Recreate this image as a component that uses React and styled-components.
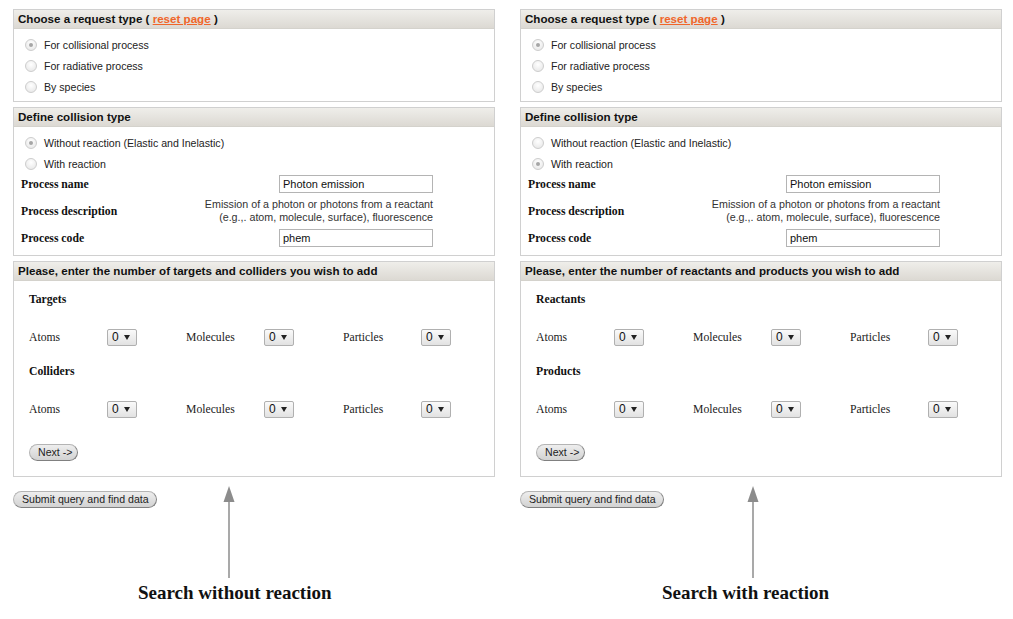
import React from "react";
import styled, { createGlobalStyle } from "styled-components";

const GlobalStyle = createGlobalStyle`
  body {
    margin: 0;
    background: #fff;
    font-family: "Liberation Sans", Arial, sans-serif;
    color: #222;
  }
`;

const Page = styled.div`
  display: flex;
  gap: 25px;
  padding: 9px 0 0 13px;
`;

const Column = styled.div`
  width: 482px;
  display: flex;
  flex-direction: column;
  gap: 5px;
`;

const Box = styled.div`
  border: 1px solid #d0d0d0;
  background: #fff;
`;

const BoxHeader = styled.div`
  height: 18px;
  line-height: 18px;
  padding-left: 4px;
  font-size: 11.6px;
  font-weight: bold;
  color: #111;
  background: linear-gradient(#efeeea, #dcd9d3);
  border-bottom: 1px solid #d4d2cc;
  white-space: nowrap;
`;

const ResetLink = styled.a`
  color: #f0662a;
  text-decoration: underline;
  cursor: pointer;
`;

const RadioList = styled.div`
  padding: 5px 0 ${p => p.$bottom ?? 4}px 11px;
`;

const RadioRow = styled.label`
  display: flex;
  align-items: center;
  gap: 7px;
  height: 21px;
  font-size: 10.6px;
  color: #222;
`;

const RadioDot = styled.span`
  width: 10px;
  height: 10px;
  border-radius: 50%;
  border: 1px solid #cdcdcd;
  background: radial-gradient(circle at 50% 35%, #ffffff, #e4e4e4);
  display: flex;
  align-items: center;
  justify-content: center;

  &::after {
    content: "";
    width: 4px;
    height: 4px;
    border-radius: 50%;
    background: #a6a6a6;
    display: ${p => (p.$checked ? "block" : "none")};
  }
`;

const ProcessTable = styled.div`
  display: grid;
  grid-template-columns: auto 1fr;
  row-gap: 5px;
  align-items: center;
  padding: 1px 61px 8px 7px;
`;

const ProcessLabel = styled.div`
  font-family: "Liberation Serif", "Times New Roman", serif;
  font-weight: bold;
  font-size: 11.7px;
  color: #111;
`;

const ProcessValue = styled.div`
  justify-self: end;
  text-align: right;
  font-size: 10.7px;
  line-height: 13px;
  color: #333;
`;

const TextInput = styled.div`
  box-sizing: border-box;
  width: 154px;
  height: 18px;
  line-height: 16px;
  padding-left: 3px;
  border: 1px solid #b4b4b4;
  font-size: 11px;
  color: #111;
  text-align: left;
`;

const CountArea = styled.div`
  padding: 12px 0 15px 15px;
`;

const Section = styled.div`
  margin-bottom: ${p => p.$gap}px;
`;

const SectionTitle = styled.div`
  height: 14px;
  line-height: 14px;
  margin-bottom: 21px;
  font-family: "Liberation Serif", "Times New Roman", serif;
  font-weight: bold;
  font-size: 11.7px;
  color: #111;
`;

const CountRow = styled.div`
  display: grid;
  grid-template-columns: repeat(3, 78px 79px);
  align-items: center;
  height: 18px;
`;

const CountLabel = styled.div`
  font-family: "Liberation Serif", "Times New Roman", serif;
  font-size: 11.7px;
  color: #222;
`;

const Select = styled.div`
  box-sizing: border-box;
  width: 30px;
  height: 17px;
  display: flex;
  align-items: center;
  gap: 5px;
  padding-left: 4px;
  border: 1px solid #b0b0b0;
  border-radius: 2px;
  background: linear-gradient(#fafafa, #e2e2e2);
  font-size: 12px;
  color: #111;

  &::after {
    content: "";
    border-left: 3px solid transparent;
    border-right: 3px solid transparent;
    border-top: 5px solid #222;
  }
`;

const PillButton = styled.button`
  box-sizing: border-box;
  height: 17px;
  padding: 0 0 0 8px;
  border: 1px solid #b4b4b4;
  border-right-color: #808080;
  border-bottom-color: #808080;
  border-radius: 9px;
  background: linear-gradient(#eeeeee, #d2d2d2);
  font-family: "Liberation Sans", Arial, sans-serif;
  font-size: 10.6px;
  color: #222;
  line-height: 15px;
  text-align: left;
  white-space: nowrap;
  cursor: pointer;
`;

const NextButton = styled(PillButton)`
  display: block;
  width: 49px;
  margin-top: 26px;
`;

const SubmitButton = styled(PillButton)`
  width: 144px;
  margin-top: 9px;
  flex-shrink: 0;
`;

const Footer = styled.div`
  display: flex;
  flex-direction: column;
`;

const FooterRow = styled.div`
  display: flex;
  align-items: flex-start;
`;

const ArrowWrap = styled.div`
  margin-top: 4px;
  margin-left: ${p => p.$offset}px;
  width: 12px;
  height: 92px;
  color: #8c8c8c;
`;

const Caption = styled.div`
  margin-top: 4px;
  padding-left: ${p => p.$indent}px;
  font-family: "Liberation Serif", "Times New Roman", serif;
  font-weight: bold;
  font-size: 19px;
  line-height: 22px;
  color: #111;
`;

const UpArrow = () => (
  <svg width="12" height="92" viewBox="0 0 12 92">
    <line x1="6" y1="14" x2="6" y2="92" stroke="currentColor" strokeWidth="1.5" />
    <polygon points="6,0 11.5,16 0.5,16" fill="currentColor" />
  </svg>
);

const panels = [
  {
    collision: 0,
    countTitle: "Please, enter the number of targets and colliders you wish to add",
    groups: ["Targets", "Colliders"],
    arrowOffset: 66,
    captionIndent: 125,
    caption: "Search without reaction",
  },
  {
    collision: 1,
    countTitle: "Please, enter the number of reactants and products you wish to add",
    groups: ["Reactants", "Products"],
    arrowOffset: 83,
    captionIndent: 142,
    caption: "Search with reaction",
  },
];

const Radio = ({ checked, children }) => (
  <RadioRow>
    <RadioDot $checked={checked} />
    {children}
  </RadioRow>
);

const Panel = ({ data }) => (
  <Column>
    <Box>
      <BoxHeader>
        Choose a request type ( <ResetLink>reset page</ResetLink> )
      </BoxHeader>
      <RadioList>
        <Radio checked>For collisional process</Radio>
        <Radio>For radiative process</Radio>
        <Radio>By species</Radio>
      </RadioList>
    </Box>

    <Box>
      <BoxHeader>Define collision type</BoxHeader>
      <RadioList $bottom={0}>
        <Radio checked={data.collision === 0}>Without reaction (Elastic and Inelastic)</Radio>
        <Radio checked={data.collision === 1}>With reaction</Radio>
      </RadioList>
      <ProcessTable>
        <ProcessLabel>Process name</ProcessLabel>
        <ProcessValue>
          <TextInput>Photon emission</TextInput>
        </ProcessValue>
        <ProcessLabel>Process description</ProcessLabel>
        <ProcessValue>
          Emission of a photon or photons from a reactant
          <br />
          (e.g.,. atom, molecule, surface), fluorescence
        </ProcessValue>
        <ProcessLabel>Process code</ProcessLabel>
        <ProcessValue>
          <TextInput>phem</TextInput>
        </ProcessValue>
      </ProcessTable>
    </Box>

    <Box>
      <BoxHeader>{data.countTitle}</BoxHeader>
      <CountArea>
        {data.groups.map((g, i) => (
          <Section key={g} $gap={i === 0 ? 19 : 0}>
            <SectionTitle>{g}</SectionTitle>
            <CountRow>
              <CountLabel>Atoms</CountLabel>
              <div><Select>0</Select></div>
              <CountLabel>Molecules</CountLabel>
              <div><Select>0</Select></div>
              <CountLabel>Particles</CountLabel>
              <div><Select>0</Select></div>
            </CountRow>
          </Section>
        ))}
        <NextButton>Next -&gt;</NextButton>
      </CountArea>
    </Box>

    <Footer>
      <FooterRow>
        <SubmitButton>Submit query and find data</SubmitButton>
        <ArrowWrap $offset={data.arrowOffset}>
          <UpArrow />
        </ArrowWrap>
      </FooterRow>
      <Caption $indent={data.captionIndent}>{data.caption}</Caption>
    </Footer>
  </Column>
);

export default function App() {
  return (
    <>
      <GlobalStyle />
      <Page>
        {panels.map((p, i) => (
          <Panel key={i} data={p} />
        ))}
      </Page>
    </>
  );
}
